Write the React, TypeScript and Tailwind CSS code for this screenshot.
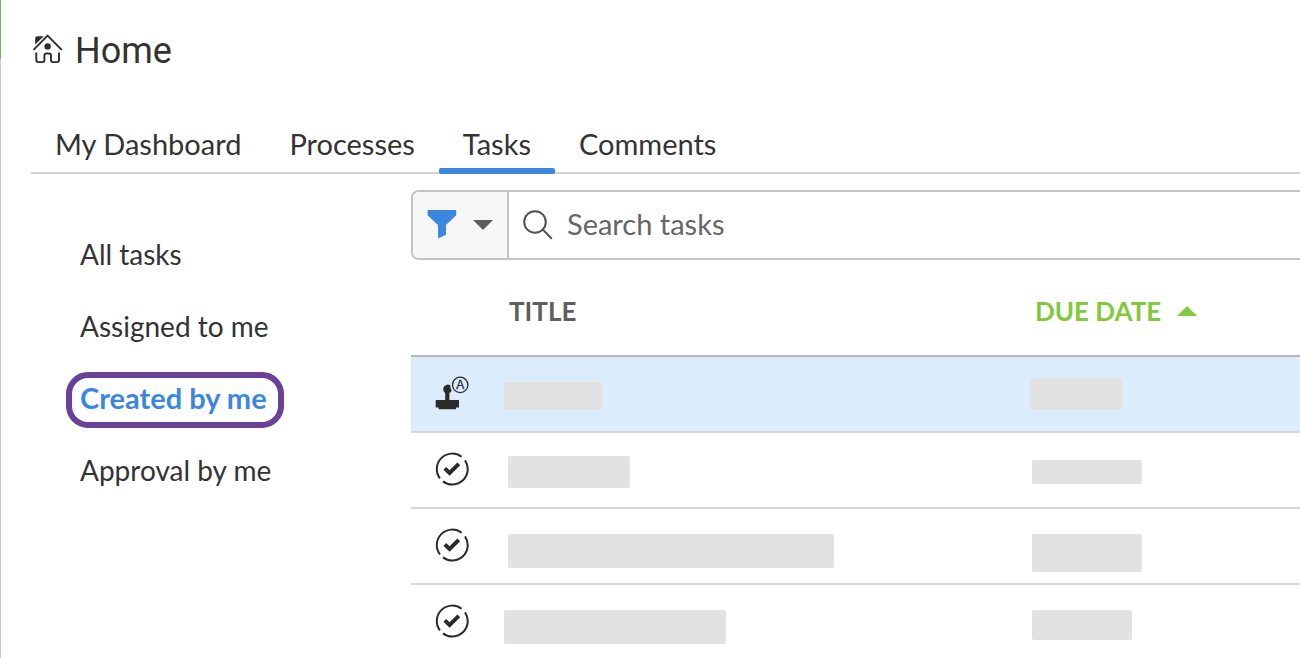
import React, { useState } from "react";
import clsx from "clsx";

const tabs = ["My Dashboard", "Processes", "Tasks", "Comments"];

const filters = ["All tasks", "Assigned to me", "Created by me", "Approval by me"];

const rows = [
  { id: 1, type: "approval", title: "mt-[25px] h-7 w-[98px]", due: "mt-[21px] h-8 w-[92px]" },
  { id: 2, type: "task", title: "mt-[23px] ml-1 h-8 w-[122px]", due: "mt-[27px] ml-0.5 h-6 w-[110px]" },
  { id: 3, type: "task", title: "mt-[25px] ml-1 h-[34px] w-[326px]", due: "mt-[25px] ml-0.5 h-[38px] w-[110px]" },
  { id: 4, type: "task", title: "mt-[25px] h-[34px] w-[222px]", due: "mt-[25px] ml-0.5 h-[30px] w-[100px]" },
];

const HomeIcon = () => (
  <svg width="30" height="32" viewBox="0 0 30 32" fill="none" aria-hidden="true">
    <path d="M2.2 10.4V4.4a2.2 2.2 0 0 1 2.2-2.2h6.4z" fill="#2b2b2b" />
    <path d="M1 15.4 14.6 1.6 28.2 15.4" stroke="#2b2b2b" strokeWidth="1.9" strokeLinecap="round" strokeLinejoin="round" />
    <circle cx="14.6" cy="12.4" r="3.2" fill="#2b2b2b" />
    <path
      d="M3.3 19.2v6.9q0 2 2 2h4.4q1.7 0 1.7-2v-4.6q0-2 2-2h2.6q2 0 2 2v4.6q0 2 1.8 2h4.2q2 0 2-2v-6.9"
      stroke="#2b2b2b"
      strokeWidth="1.9"
      strokeLinecap="round"
    />
  </svg>
);

const FunnelIcon = () => (
  <svg width="30" height="30" viewBox="0 0 30 30" aria-hidden="true">
    <path d="M.6 0h28.6v5.3L19 15v9.8l-8 3.6V15L.6 5.3z" fill="#3b87e0" />
  </svg>
);

const SearchIcon = () => (
  <svg width="30" height="30" viewBox="0 0 30 30" fill="none" stroke="#505050" strokeWidth="2" aria-hidden="true">
    <circle cx="12" cy="12" r="10.8" />
    <path d="m19.6 19.4 9.2 9.4" />
  </svg>
);

const CheckIcon = () => (
  <svg width="34" height="34" viewBox="0 0 34 34" fill="none" aria-label="Task">
    <path d="M26.6 4.8A15.4 15.4 0 0 0 5 26.4" stroke="#2b2b2b" strokeWidth="2" />
    <path d="M8 29.4A15.4 15.4 0 0 0 30 8.4" stroke="#2b2b2b" strokeWidth="2" />
    <path d="m9.8 16.4 4.8 4.6 9.2-9.2" stroke="#2b2b2b" strokeWidth="4" />
  </svg>
);

const ApprovalIcon = () => (
  <svg width="34" height="34" viewBox="0 0 34 34" aria-label="Approval">
    <path
      d="M15.4 9.4A4.4 4.4 0 1 0 10.2 17V24H.7v7.6h3v1.6h17.3v-1.6h3V24h-9.6v-7a4.5 4.5 0 0 0 2.3-2.2 8 8 0 0 1-1.3-5.4z"
      fill="#2b2b2b"
    />
    <circle cx="25.2" cy="8.9" r="7.7" fill="none" stroke="#2b2b2b" strokeWidth="1.3" />
    <text
      x="25.2"
      y="13"
      textAnchor="middle"
      fontSize="12"
      fill="#2b2b2b"
      stroke="#2b2b2b"
      strokeWidth="0.3"
      className="font-['Liberation_Sans',sans-serif]"
    >
      A
    </text>
  </svg>
);

const Caret = ({ up }: { up?: boolean }) => (
  <svg width="20" height="10" viewBox="0 0 20 10" aria-hidden="true">
    {up ? <path d="M0 10 10 0l10 10z" fill="#82c83c" /> : <path d="M0 0h20L10 10z" fill="#5c5c5c" />}
  </svg>
);

const App = () => {
  const [activeTab, setActiveTab] = useState("Tasks");
  const [activeFilter, setActiveFilter] = useState("Created by me");
  const [search, setSearch] = useState("");

  return (
    <div className="flex min-h-screen bg-white font-['Lato',sans-serif] text-[29px] leading-9 text-[#333333]">
      <div className="flex w-px shrink-0 flex-col bg-[#c8c8c8]">
        <div className="h-[59px] bg-[#6cb85c]" />
      </div>

      <div className="min-w-0 flex-1 pl-[30px]">
        <header className="flex h-[100px] items-center gap-3 pl-0.5">
          <HomeIcon />
          <h1 className="pt-0.5 font-['Roboto',sans-serif] text-[36px]">Home</h1>
        </header>

        <nav className="flex h-[74px] items-end border-b-2 border-[#d2d2d2]">
          {tabs.map((tab) => (
            <button
              key={tab}
              onClick={() => setActiveTab(tab)}
              className={clsx(
                "relative -mb-0.5 h-12 px-6 pb-3",
                tab === activeTab && "after:absolute after:inset-x-0 after:bottom-0 after:h-1.5 after:rounded-xs after:bg-[#3b87e0]"
              )}
            >
              {tab}
            </button>
          ))}
        </nav>

        <div className="flex">
          <aside className="w-[380px] shrink-0 pt-[54px] pl-[35px]">
            <ul className="flex flex-col gap-4">
              {filters.map((filter) => (
                <li key={filter}>
                  <button
                    onClick={() => setActiveFilter(filter)}
                    className={clsx(
                      "h-14 w-[218px] rounded-[22px] border-6 pb-1 pl-2 text-left",
                      filter === activeFilter
                        ? "border-[#6c3f98] font-bold text-[#3b87e0]"
                        : "border-transparent text-[28px]"
                    )}
                  >
                    {filter}
                  </button>
                </li>
              ))}
            </ul>
          </aside>

          <main className="min-w-0 flex-1 pt-4">
            <div className="flex h-[70px] rounded-l-lg border-2 border-r-0 border-[#c3c3c3]">
              <button
                aria-label="Filter tasks"
                className="flex w-24 shrink-0 items-center justify-center gap-4 rounded-l-md border-r-2 border-[#c3c3c3] bg-[#f7f7f7]"
              >
                <FunnelIcon />
                <Caret />
              </button>
              <label className="flex flex-1 items-center gap-3.5 pl-3.5">
                <SearchIcon />
                <input
                  type="text"
                  aria-label="Search tasks"
                  placeholder="Search tasks"
                  value={search}
                  onChange={(e) => setSearch(e.target.value)}
                  className="min-w-0 flex-1 pb-0.5 placeholder-[#666666] outline-none"
                />
              </label>
            </div>

            <table className="w-full table-fixed border-separate border-spacing-0">
              <thead>
                <tr className="text-left text-[26px] text-[#5f5f5f]">
                  <th className="h-[97px] w-[93px] border-b-2 border-[#b4b8bb]" aria-label="Type" />
                  <th className="w-[526px] border-b-2 border-[#b4b8bb] pt-1.5 pl-[5px] font-bold">TITLE</th>
                  <th className="border-b-2 border-[#b4b8bb] pt-1.5 pl-[5px] font-bold">
                    <button className="flex items-center gap-4 text-[#82c83c]">
                      DUE DATE
                      <Caret up />
                    </button>
                  </th>
                </tr>
              </thead>
              <tbody>
                {rows.map((row) => (
                  <tr
                    key={row.id}
                    className={clsx(
                      "*:h-[76px] *:border-b-2 *:border-[#d8d8d8] *:align-top last:*:border-b-0",
                      row.type === "approval" && "bg-[#dbecfc]"
                    )}
                  >
                    <td className="pt-[19px] pl-6">{row.type === "approval" ? <ApprovalIcon /> : <CheckIcon />}</td>
                    <td>
                      <div className={clsx("rounded-xs bg-[#e2e2e2]", row.title)} />
                    </td>
                    <td>
                      <div className={clsx("rounded-xs bg-[#e2e2e2]", row.due)} />
                    </td>
                  </tr>
                ))}
              </tbody>
            </table>
          </main>
        </div>
      </div>
    </div>
  );
};

export default App;
